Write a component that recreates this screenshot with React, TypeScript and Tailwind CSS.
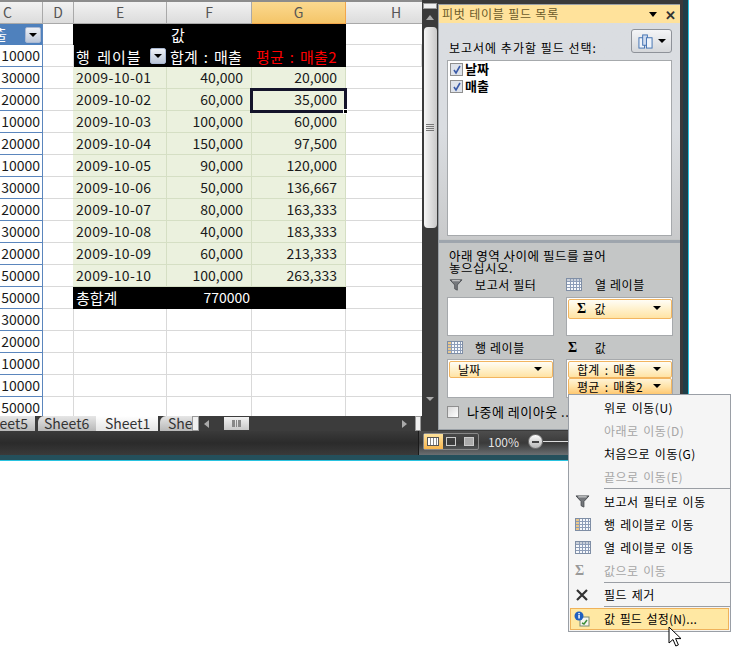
import type { ReactNode } from 'react'

const font = 'font-["Noto_Sans_CJK_KR","Noto_Sans",sans-serif]'

const colC = [10000, 30000, 20000, 10000, 20000, 10000, 30000, 20000, 30000, 20000, 50000, 50000, 30000, 20000, 10000, 10000, 50000]

const pivot = [
  ['2009-10-01', '40,000', '20,000'],
  ['2009-10-02', '60,000', '35,000'],
  ['2009-10-03', '100,000', '60,000'],
  ['2009-10-04', '150,000', '97,500'],
  ['2009-10-05', '90,000', '120,000'],
  ['2009-10-06', '50,000', '136,667'],
  ['2009-10-07', '80,000', '163,333'],
  ['2009-10-08', '40,000', '183,333'],
  ['2009-10-09', '60,000', '213,333'],
  ['2009-10-10', '100,000', '263,333'],
]

const cols = 'grid grid-cols-[43px_31px_93px_85px_94px_76px]'
const cell = 'h-[22px] border-b border-r border-[#d9d9d9] bg-white'
const headCell = 'border-r border-b border-[#a9a9a9] bg-gradient-to-b from-[#f2f2f2] to-[#dcdcdc]'

function Funnel({ className = '' }: { className?: string }) {
  return (
    <svg viewBox="0 0 16 14" className={className}>
      <path d="M1 1h14L9.5 7v6l-3-1.5V7z" fill="#75787c" stroke="#4a4d51" strokeWidth="1" />
      <path d="M3.5 2h9" stroke="#e8e8e8" />
    </svg>
  )
}

function GridIcon({ head = 'top' }: { head?: 'top' | 'left' }) {
  return (
    <svg viewBox="0 0 16 13" className="h-[13px] w-[16px]">
      <rect x="0.5" y="0.5" width="15" height="12" fill="#f7f9fc" stroke="#7f8ea5" />
      {head === 'top' ? (
        <rect x="1" y="1" width="14" height="3" fill="#c9cfd8" />
      ) : (
        <rect x="1" y="1" width="3" height="11" fill="#eac78a" />
      )}
      <path d="M4.5 1v11M7.5 1v11M10.5 1v11M13.5 1v11M1 3.5h14M1 6.5h14M1 9.5h14" stroke="#8d9db8" strokeWidth="1" />
    </svg>
  )
}

function Caret({ className = '' }: { className?: string }) {
  return <span className={`h-0 w-0 border-x-[4px] border-t-[4px] border-x-transparent border-t-black ${className}`} />
}

function FilterBtn() {
  return (
    <span className="flex h-[16px] w-[16px] shrink-0 items-center justify-center rounded-[2px] border border-[#a9b8d2] bg-gradient-to-b from-[#eef1f6] to-[#bcc7d9]">
      <Caret className="border-t-[#2b3a63]" />
    </span>
  )
}

function Check({ label }: { label: string }) {
  return (
    <div className="flex h-[17px] items-center gap-[2px]">
      <span className="flex h-[13px] w-[13px] items-center justify-center border border-[#8f8f8f] bg-[#dfe3ea]">
        <svg viewBox="0 0 10 10" className="h-[10px] w-[10px]">
          <path d="M2 5l2 3 4-7" fill="none" stroke="#3a5aa8" strokeWidth="1.6" />
        </svg>
      </span>
      <span className="-mt-[2px] text-[13px] leading-none font-bold text-black">{label}</span>
    </div>
  )
}

function Chip({ children, tall, strong }: { children: ReactNode; tall?: boolean; strong?: boolean }) {
  return (
    <div
      className={`relative flex w-[104px] items-center rounded-[2px] border border-[#f2b560] bg-gradient-to-b pl-[8px] text-[12px] leading-none tracking-[0.3px] text-black [word-spacing:2px] ${
        tall ? 'h-[20px]' : 'h-[17px]'
      } ${strong ? 'from-[#fff3d6] via-[#ffe3a8] to-[#ffc870]' : 'from-[#fffdf6] via-[#fff1cc] to-[#ffe3a4]'}`}
    >
      {children}
      <Caret className={`absolute right-[10px] ${tall ? 'top-[6px]' : 'top-[5px]'}`} />
    </div>
  )
}

function MenuItem({ label, icon, off }: { label: string; icon?: ReactNode; off?: boolean }) {
  return (
    <div className={`flex h-[23px] items-center text-[12px] leading-none tracking-[0.5px] [word-spacing:1.5px] ${off ? 'text-[#a6a6a6]' : 'text-black'}`}>
      <span className="flex w-[35px] shrink-0 pl-[6px]">{icon}</span>
      <span>{label}</span>
    </div>
  )
}

function Sep({ gap }: { gap?: boolean }) {
  return <div className={`ml-[35px] h-px bg-[#9a9ea4] ${gap ? 'mb-px' : ''}`} />
}

export default function App() {
  return (
    <div className={`relative h-[648px] w-[739px] overflow-hidden bg-white ${font}`}>
      <div className="flex h-[461px] w-[689px] flex-col bg-[#3a3a3a]">
        <div className="flex h-[431px] shrink-0">
          {/* sheet */}
          <div className="flex w-[422px] shrink-0 flex-col border-t-2 border-[#8c8c8c]">
            <div className={`${cols} h-[22px] text-center text-[14px] leading-[21px] text-[#555]`}>
              <div className={`${headCell} pl-[3px] text-left`}>C</div>
              <div className={headCell}>D</div>
              <div className={headCell}>E</div>
              <div className={headCell}>F</div>
              <div className="border-r border-b border-[#f2a64a] bg-gradient-to-b from-[#fbd98f] to-[#f4c568]">G</div>
              <div className="border-b border-[#a9a9a9] bg-gradient-to-b from-[#f2f2f2] to-[#dcdcdc] pl-[45px] text-left">H</div>
            </div>

            <div className={`${cols} relative flex-1 overflow-hidden text-[14px] leading-[21px] text-[#1a1a1a]`}>
              {/* top of column C is the blue table header */}
              <div className="flex h-[21px] items-center justify-between overflow-hidden border-r border-[#5b86bd] bg-[#4f81bd] pr-px text-white">
                <span className="-ml-[6px]">출</span>
                <FilterBtn />
              </div>
              <div className="h-[21px] border-r border-b border-[#d9d9d9] bg-white" />
              <div className="col-span-3 row-span-2 -ml-px grid h-[43px] grid-cols-[94px_85px_94px] bg-black text-[15px] text-white">
                <div />
                <div className="pl-[4px]">값</div>
                <div />
                <div className="flex items-center justify-between pr-px pl-[3px] tracking-[1px] whitespace-nowrap [word-spacing:2px]">
                  행 레이블
                  <FilterBtn />
                </div>
                <div className="pl-[3px] tracking-[0.3px] whitespace-nowrap [word-spacing:2px]">합계 : 매출</div>
                <div className="pl-[4px] tracking-[0.3px] whitespace-nowrap text-[#ff0000] [word-spacing:2px]">평균 : 매출2</div>
              </div>
              <div className="h-[21px] border-b border-[#d9d9d9] bg-white" />
              <div className="flex h-[22px] items-center justify-end border-r border-b border-[#5b86bd] bg-white pr-[2px]">{colC[0]}</div>
              <div className={cell} />
              <div className={cell} />

              {colC.slice(1).map((v, i) => {
                const row = pivot[i]
                const isTotal = i === 10
                return (
                  <div key={i} className="contents">
                    <div className="flex h-[22px] items-center justify-end overflow-hidden border-r border-b border-[#5b86bd] bg-white pr-[2px]">{v}</div>
                    <div className={cell} />
                    {row ? (
                      <>
                        <div className="-ml-px h-[22px] border-r border-b border-[#d5dfc4] bg-[#ebf1de] pl-[3px] tracking-[0.35px]">{row[0]}</div>
                        <div className="h-[22px] border-r border-b border-[#d5dfc4] bg-[#ebf1de] pr-[8px] text-right">{row[1]}</div>
                        <div className="h-[22px] border-r border-b border-[#d5dfc4] bg-[#ebf1de] pr-[8px] text-right">{row[2]}</div>
                      </>
                    ) : isTotal ? (
                      <>
                        <div className="-ml-px h-[22px] bg-black pl-[3px] text-[15px] text-white">총합계</div>
                        <div className="h-[22px] bg-black pr-[2px] text-right text-white">770000</div>
                        <div className="h-[22px] bg-black" />
                      </>
                    ) : (
                      <>
                        <div className={cell} />
                        <div className={cell} />
                        <div className={cell} />
                      </>
                    )}
                    <div className="h-[22px] border-b border-[#d9d9d9] bg-white" />
                  </div>
                )
              })}

              {/* active cell */}
              <div className="absolute top-[64px] left-[250px] h-[25px] w-[97px] border-[3px] border-[#14142a]">
                <span className="absolute -right-[4px] -bottom-[4px] h-[5px] w-[5px] border border-white bg-black" />
              </div>
            </div>

            <div className="flex h-[15px] shrink-0 bg-[#3c3c3c] text-[14px] leading-[14px] text-[#333]">
              <div className="flex w-[192px] overflow-hidden">
                <span className="flex w-[35px] shrink-0 justify-end overflow-hidden bg-gradient-to-b from-[#e6e6e6] to-[#b8b8b8] pr-[7px]">eet5</span>
                <span className="ml-[3px] w-[58px] shrink-0 rounded-tl-[6px] bg-gradient-to-b from-[#e6e6e6] to-[#b8b8b8] pl-[6px]">Sheet6</span>
                <span className="w-[62px] shrink-0 bg-gradient-to-b from-white to-[#e4e4e4] pl-[9px]">Sheet1</span>
                <span className="ml-[2px] flex-1 overflow-hidden rounded-tl-[6px] bg-gradient-to-b from-[#e6e6e6] to-[#b8b8b8] pl-[8px]">She</span>
              </div>
              <span className="h-[15px] w-[7px] border border-[#999] bg-[#f0f0f0]" />
              <div className="relative flex flex-1 items-center">
                <span className="ml-[5px] h-0 w-0 border-y-[4px] border-r-[5px] border-y-transparent border-r-[#aaa]" />
                <span className="ml-[15px] flex h-[13px] w-[25px] items-center justify-center bg-gradient-to-b from-[#f2f2f2] to-[#c8c8c8]">
                  <span className="h-[7px] w-[9px] border-x-2 border-[#888] bg-[repeating-linear-gradient(90deg,#888_0,#888_1px,transparent_1px,transparent_2px)]" />
                </span>
                <span className="mr-[8px] ml-auto h-0 w-0 border-y-[4px] border-l-[5px] border-y-transparent border-l-[#aaa]" />
                <span className="mr-[1px] h-[15px] w-[6px] border border-[#999] bg-[#f0f0f0]" />
              </div>
            </div>
          </div>

          {/* vertical scrollbar */}
          <div className="flex w-[16px] shrink-0 flex-col items-center pt-[3px]">
            <span className="h-[6px] w-[14px] border border-[#999] bg-[#f0f0f0]" />
            <span className="mt-[6px] h-0 w-0 border-x-[4px] border-b-[5px] border-x-transparent border-b-[#aaa]" />
            <div className="mt-[7px] flex h-[201px] w-[13px] items-center justify-center rounded-sm bg-gradient-to-r from-[#f6f6f6] to-[#c9c9c9]">
              <span className="h-[7px] w-[8px] bg-[repeating-linear-gradient(180deg,#777_0,#777_1px,transparent_1px,transparent_2px)]" />
            </div>
            <span className="mt-auto mb-[30px] h-0 w-0 border-x-[4px] border-t-[4px] border-x-transparent border-t-[#aaa]" />
          </div>

          {/* field list pane */}
          <div className="mt-[4px] mb-[1px] flex w-[243px] shrink-0 flex-col border border-[#9aa0a6] bg-[#c4c6c6] text-[12px] leading-none text-black">
            <div className="flex h-[18px] shrink-0 items-center bg-[#ffe29b] pl-[3px] tracking-[0.8px] text-[#6b5a2a]">
              <span>피벗 테이블 필드 목록</span>
              <Caret className="ml-auto border-x-[4px] border-t-[5px] border-t-[#3c3c3c]" />
              <span className="mr-[3px] ml-[8px] text-[13px] font-bold text-[#333]">✕</span>
            </div>
            <div className="h-[216px] shrink-0 bg-gradient-to-b from-[#dadde1] via-[#dadde1] to-[#c9cacb] px-[8px]">
              <div className="flex h-[37px] items-end justify-between">
                <span className="mb-[6px] ml-[2px] tracking-[1px]">보고서에 추가할 필드 선택:</span>
                <span className="mb-[7px] flex h-[24px] w-[41px] items-center justify-center gap-[5px] rounded-[3px] border border-[#8e9299] bg-gradient-to-b from-[#f4f5f7] to-[#d5d7da]">
                  <svg viewBox="0 0 16 16" className="h-[15px] w-[15px]">
                    <rect x="1" y="4" width="6" height="11" fill="#eef3fa" stroke="#3f6fb0" />
                    <rect x="5" y="1" width="5" height="11" fill="#cfdcf0" stroke="#3f6fb0" />
                    <rect x="9" y="4" width="6" height="11" fill="#eef3fa" stroke="#3f6fb0" />
                  </svg>
                  <Caret />
                </span>
              </div>
              <div className="h-[176px] border border-[#a6a9ac] bg-white pl-[2px]">
                <Check label="날짜" />
                <Check label="매출" />
              </div>
            </div>
            <div className="mt-[1px] h-[3px] shrink-0 bg-[#9ea5ad]" />
            <div className="flex flex-1 flex-col px-[8px] pt-[7px]">
              <p className="ml-[2px] text-[12.5px] leading-[12px] tracking-[0.5px]">아래 영역 사이에 필드를 끌어<br />놓으십시오.</p>
              <div className="mt-[1px] grid grid-cols-[107px_107px] gap-x-[12px] tracking-[0.6px]">
                <div className="mb-[3px] flex h-[19px] items-center">
                  <Funnel className="ml-[2px] h-[12px] w-[14px]" />
                  <span className="ml-[12px]">보고서 필터</span>
                </div>
                <div className="mb-[3px] flex h-[19px] items-center">
                  <GridIcon />
                  <span className="ml-[13px]">열 레이블</span>
                </div>
                <div className="h-[39px] border border-[#a6a9ac] bg-white" />
                <div className="h-[39px] border border-[#a6a9ac] bg-white pt-px pl-px">
                  <Chip tall>
                    <span className="mr-[8px] font-serif text-[14px] font-bold">Σ</span>값
                  </Chip>
                </div>
                <div className="mt-[2px] mb-[2px] flex h-[19px] items-center">
                  <GridIcon head="left" />
                  <span className="ml-[12px]">행 레이블</span>
                </div>
                <div className="mt-[2px] mb-[2px] flex h-[19px] items-center">
                  <span className="ml-[2px] font-serif text-[14px] font-bold">Σ</span>
                  <span className="ml-[17px]">값</span>
                </div>
                <div className="h-[39px] border border-[#a6a9ac] bg-white pt-px pl-px">
                  <Chip>날짜</Chip>
                </div>
                <div className="h-[39px] border border-[#a6a9ac] bg-white pt-px pl-px">
                  <Chip>합계 : 매출</Chip>
                  <Chip strong>평균 : 매출2</Chip>
                </div>
              </div>
              <div className="mt-[7px] flex items-center tracking-[0.5px]">
                <span className="h-[12px] w-[12px] border border-[#8f8f8f] bg-gradient-to-br from-[#d9d9d9] to-white" />
                <span className="ml-[8px] text-[13px]">나중에 레이아웃 ...</span>
              </div>
            </div>
          </div>
        </div>

        {/* status bar */}
        <div className="flex h-[24px] shrink-0 items-stretch">
          <div className="w-[419px] shrink-0 border-r border-[#1a1a1a] bg-gradient-to-b from-[#3a3a3a] via-[#2b2b2b] to-[#3a3a3a]" />
          <div className="flex flex-1 items-center bg-gradient-to-b from-[#4d4d4d] via-[#3a3a3a] to-[#6a6f72] pb-[3px] pl-[4px]">
            <div className="flex h-[17px] w-[56px] rounded-[2px] border border-[#888]">
              <span className="flex w-[19px] items-center justify-center bg-gradient-to-b from-[#fde29b] to-[#f7b54c]">
                <span className="h-[9px] w-[12px] border border-[#555] bg-[repeating-linear-gradient(90deg,#fff_0,#fff_2px,#888_2px,#888_3px)]" />
              </span>
              <span className="flex w-[18px] items-center justify-center">
                <span className="h-[9px] w-[10px] border border-[#ccc]" />
              </span>
              <span className="flex w-[18px] items-center justify-center">
                <span className="h-[9px] w-[10px] border border-[#ccc] bg-[#aaa]" />
              </span>
            </div>
            <span className="ml-[9px] text-[12px] leading-none text-[#e4e4e4]">100%</span>
            <span className="ml-[9px] flex h-[15px] w-[15px] items-center justify-center rounded-full border border-[#777] bg-gradient-to-b from-white to-[#b5b5b5]">
              <span className="h-[2px] w-[7px] bg-[#444]" />
            </span>
            <span className="h-px w-[30px] bg-[#ddd]" />
          </div>
        </div>
        <div className="flex flex-1 flex-col justify-end bg-[#24505c]">
          <div className="h-px bg-[#29c3e0]" />
        </div>
      </div>

      {/* right window edge */}
      <div className="absolute top-0 left-[680px] flex h-[432px] w-[9px]">
        <span className="w-[3px] bg-[#3a3a3a]" />
        <span className="w-[5px] bg-[#1f3f48]" />
        <span className="w-px bg-[#29c3e0]" />
      </div>

      {/* context menu */}
      <div className="absolute top-[394px] left-[568px] w-[163px] border border-[#9a9fa6] bg-[#f5f5f5] pt-px">
        <MenuItem label="위로 이동(U)" />
        <MenuItem label="아래로 이동(D)" off />
        <MenuItem label="처음으로 이동(G)" />
        <MenuItem label="끝으로 이동(E)" off />
        <Sep gap />
        <MenuItem label="보고서 필터로 이동" icon={<Funnel className="h-[13px] w-[15px]" />} />
        <MenuItem label="행 레이블로 이동" icon={<GridIcon head="left" />} />
        <MenuItem label="열 레이블로 이동" icon={<GridIcon />} />
        <MenuItem label="값으로 이동" off icon={<span className="font-serif text-[14px] font-bold text-[#999]">Σ</span>} />
        <Sep />
        <MenuItem
          label="필드 제거"
          icon={
            <svg viewBox="0 0 14 14" className="h-[14px] w-[14px]">
              <path d="M2 2l10 10M12 2L2 12" stroke="#333" strokeWidth="2.2" />
            </svg>
          }
        />
        <Sep gap />
        <div className="mx-px mb-px flex h-[22px] items-center border border-[#efb25a] bg-[#ffe8a3] text-[12px] leading-none tracking-[0.2px] text-black [word-spacing:1.5px]">
          <span className="flex w-[33px] shrink-0 pl-[3px]">
            <svg viewBox="0 0 16 16" className="h-[16px] w-[16px]">
              <rect x="6" y="6" width="9" height="9" fill="#f5f5f0" stroke="#7a8a70" />
              <path d="M8 12l2 1 3-4" fill="none" stroke="#3e8f3a" strokeWidth="1.5" />
              <circle cx="5" cy="5" r="4.5" fill="#1f5fbf" />
              <rect x="4.3" y="4" width="1.5" height="3.5" fill="#fff" />
              <rect x="4.3" y="2" width="1.5" height="1.3" fill="#fff" />
            </svg>
          </span>
          값 필드 설정(N)...
        </div>
      </div>

      {/* mouse cursor */}
      <svg viewBox="0 0 14 22" className="absolute top-[626px] left-[668px] h-[22px] w-[14px]">
        <path d="M1 1v16l4-3.5 2.8 6.5 2.6-1.1-2.8-6.3H13z" fill="#fff" stroke="#000" strokeWidth="1" />
      </svg>
    </div>
  )
}
